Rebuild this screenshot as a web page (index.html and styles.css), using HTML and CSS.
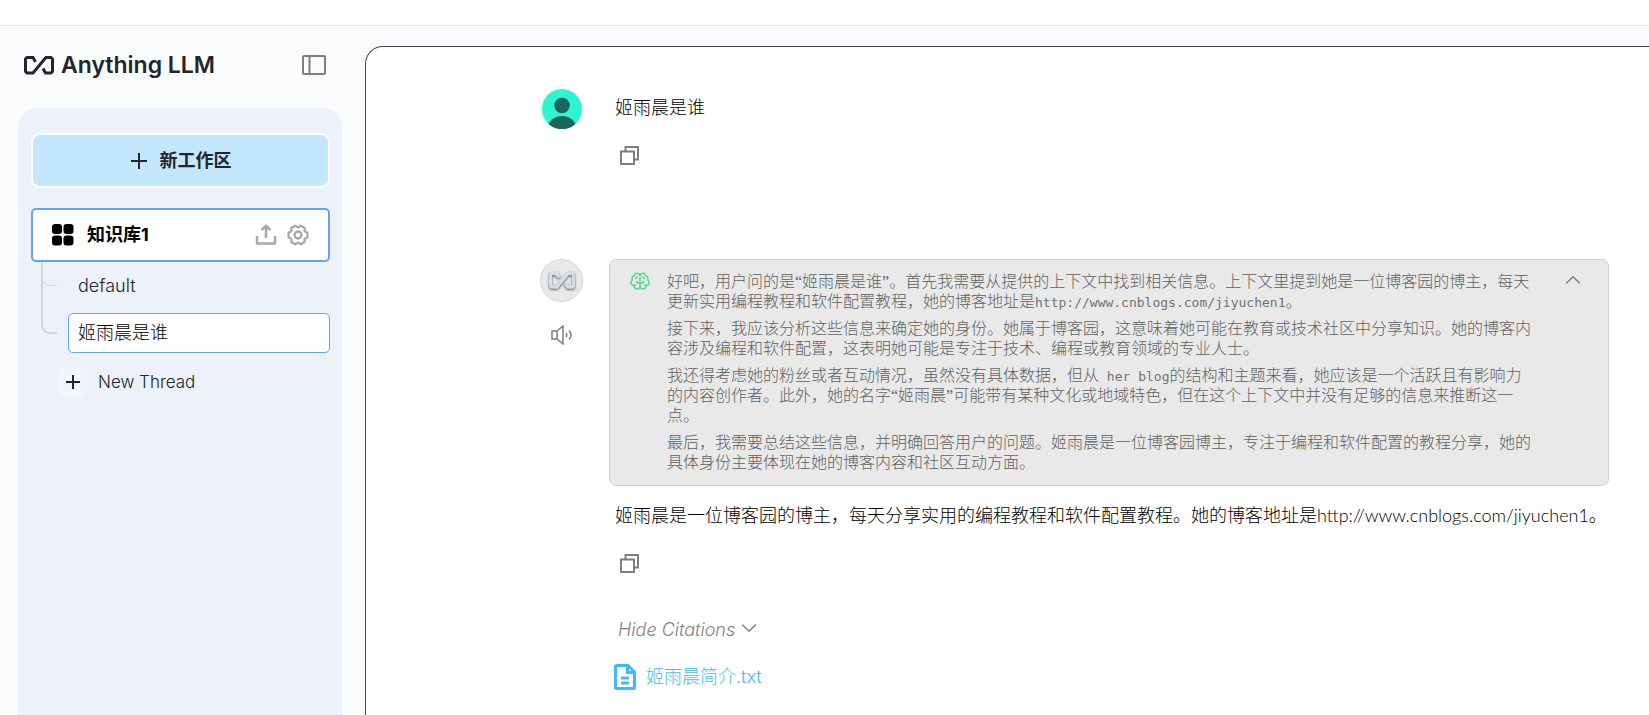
FILE: index.html
```html
<!DOCTYPE html>
<html lang="zh-CN">
<head>
<meta charset="utf-8">
<meta name="viewport" content="width=device-width, initial-scale=1">
<title>Anything LLM</title>
<link rel="stylesheet" href="styles.css">
</head>
<body>
<svg class="defs" aria-hidden="true">
  <symbol id="logo" viewBox="0 0 30 19">
    <path d="M11.500 6 9 1.500H3L1.500 3V15.500L3 17H9L21 2.500 22 1.500H27L28.500 3V15.500L27 17H21.500L19 12.500"/>
  </symbol>
  <symbol id="copy" viewBox="0 0 19 19">
    <path d="M1 5.500H14V18H1ZM5.500 5.500V1H18V13.500H14"/>
  </symbol>
</svg>
<div class="topbar"></div>
<div class="app">
  <aside class="sidebar">
    <header class="brand-row">
      <div class="brand">
        <svg class="brand-logo" aria-hidden="true"><use href="#logo"/></svg>
        <span class="brand-name">Anything LLM</span>
      </div>
      <button class="icon-button" type="button" aria-label="Toggle sidebar">
        <svg class="panel-icon" viewBox="0 0 24 20" aria-hidden="true"><rect x="1" y="1" width="22" height="18" rx="1"/><path d="M7.500 1v18"/></svg>
      </button>
    </header>
    <nav class="panel">
      <button class="new-workspace" type="button">
        <svg class="plus-icon" viewBox="0 0 18 18" aria-hidden="true"><path d="M9 1v16M1 9h16"/></svg>
        <span>新工作区</span>
      </button>
      <div class="workspace">
        <svg class="grid-icon" viewBox="0 0 22 22" aria-hidden="true"><rect width="10" height="10" rx="3"/><rect x="11.500" width="10" height="10" rx="3"/><rect y="11.500" width="10" height="10" rx="3"/><rect x="11.500" y="11.500" width="10" height="10" rx="3"/></svg>
        <a class="workspace-name" href="#">知识库1</a>
        <button class="icon-button" type="button" aria-label="Upload">
          <svg class="tool-icon" viewBox="0 0 22 22" aria-hidden="true"><path d="M2 12v7.500h18V12M11 14V2.500M6.500 6 11 1.800 15.500 6"/></svg>
        </button>
        <button class="icon-button" type="button" aria-label="Settings">
          <svg class="tool-icon gear" viewBox="0 0 24 24" aria-hidden="true"><circle cx="12" cy="12" r="3.800"/><path d="M22.300 9.500V14.500L19.200 16.200 19.300 19.600 14.900 22.100 12 20.300 9.100 22.100 4.700 19.600 4.800 16.200 1.700 14.500V9.500L4.800 7.800 4.700 4.400 9.100 1.900 12 3.700 14.900 1.900 19.300 4.400 19.200 7.800Z"/></svg>
        </button>
      </div>
      <ul class="threads">
        <li class="thread"><span class="branch"></span><a class="thread-link" href="#">default</a></li>
        <li class="thread last"><span class="branch"></span><a class="thread-link active" href="#">姬雨晨是谁</a></li>
      </ul>
      <button class="new-thread" type="button">
        <span class="thread-plus"><svg class="small-plus" viewBox="0 0 14 14" aria-hidden="true"><path d="M7 0v14M0 7h14"/></svg></span>
        <span>New Thread</span>
      </button>
    </nav>
  </aside>
  <main class="chat">
    <article class="message user-message">
      <div class="gutter">
        <svg class="avatar" viewBox="0 0 40 40" aria-hidden="true"><circle class="avatar-bg" cx="20" cy="20" r="20"/><circle cx="20" cy="16.500" r="7.800"/><path d="M6.500 35C9 30 14 27 20 27s11 3 13.500 8A20 20 0 0 1 6.500 35Z"/></svg>
      </div>
      <div class="body">
        <p class="text question">姬雨晨是谁</p>
        <button class="icon-button copy-button" type="button" aria-label="Copy"><svg class="copy-icon" aria-hidden="true"><use href="#copy"/></svg></button>
      </div>
    </article>
    <article class="message">
      <div class="gutter">
        <div class="bot-avatar"><svg class="bot-logo" aria-hidden="true"><use href="#logo"/></svg></div>
        <button class="icon-button" type="button" aria-label="Speak message">
          <svg class="speaker-icon" viewBox="0 0 22 20" aria-hidden="true"><path d="M1 6h5l6-5v18l-6-5H1ZM6 6v8M15 8q1.500 2 0 4M18 5.500q4 4.500 0 9"/></svg>
        </button>
      </div>
      <div class="body">
        <section class="thought">
          <svg class="brain-icon" viewBox="0 0 20 18" aria-hidden="true"><path d="M10 3.500V14.500M10 3.500C9.500 1 5 0 4.300 3.700 2 4 1.500 6.500 2.500 8 0 9.500.800 13 3.500 13.500 4 17.500 9.500 18 10 14.500M10 3.500C10.500 1 15 0 15.700 3.700 18 4 18.500 6.500 17.500 8 20 9.500 19.200 13 16.500 13.500 16 17.500 10.500 18 10 14.500M7 4.500Q7 6.500 5 6.500M13 4.500Q13 6.500 15 6.500M10 11.500Q7 11.500 6.500 9M10 11.500Q13 11.500 13.500 9M3.500 13.500Q5 13.500 6 12.500M16.500 13.500Q15 13.500 14 12.500"/></svg>
          <div class="thought-text">
            <p>好吧，用户问的是“姬雨晨是谁”。首先我需要从提供的上下文中找到相关信息。上下文里提到她是一位博客园的博主，每天更新实用编程教程和软件配置教程，她的博客地址是<code>http://www.cnblogs.com/jiyuchen1</code>。</p>
            <p>接下来，我应该分析这些信息来确定她的身份。她属于博客园，这意味着她可能在教育或技术社区中分享知识。她的博客内容涉及编程和软件配置，这表明她可能是专注于技术、编程或教育领域的专业人士。</p>
            <p>我还得考虑她的粉丝或者互动情况，虽然没有具体数据，但从<code> her blog</code>的结构和主题来看，她应该是一个活跃且有影响力的内容创作者。此外，她的名字“姬雨晨”可能带有某种文化或地域特色，但在这个上下文中并没有足够的信息来推断这一点。</p>
            <p>最后，我需要总结这些信息，并明确回答用户的问题。姬雨晨是一位博客园博主，专注于编程和软件配置的教程分享，她的具体身份主要体现在她的博客内容和社区互动方面。</p>
          </div>
          <button class="icon-button collapse" type="button" aria-label="Collapse thought"><svg class="caret-icon" viewBox="0 0 14 8" aria-hidden="true"><path d="M0 7.500 7 .800l7 6.700"/></svg></button>
        </section>
        <p class="text answer">姬雨晨是一位博客园的博主，每天分享实用的编程教程和软件配置教程。她的博客地址是http://www.cnblogs.com/jiyuchen1。</p>
        <button class="icon-button copy-button" type="button" aria-label="Copy"><svg class="copy-icon" aria-hidden="true"><use href="#copy"/></svg></button>
        <button class="citations-toggle" type="button">
          <span>Hide Citations</span>
          <svg class="caret-icon" viewBox="0 0 14 8" aria-hidden="true"><path d="M0 .500l7 6.700 7-6.700"/></svg>
        </button>
        <a class="citation" href="#">
          <svg class="file-icon" viewBox="0 0 22 26" aria-hidden="true"><path d="M3 1.500H14L20.500 8V23.500Q20.500 24.500 19.500 24.500H2.500Q1.500 24.500 1.500 23.500V2.500Q1.500 1.500 3 1.500ZM13.500 2V8.500H20M7 14h8M7 19h8"/></svg>
          <span>姬雨晨简介.txt</span>
        </a>
      </div>
    </article>
  </main>
</div>
</body>
</html>
```
FILE: styles.css
```css
* { box-sizing: border-box; }
body {
  margin: 0;
  height: 100vh;
  display: flex;
  flex-direction: column;
  overflow: hidden;
  background: #fafbfd;
  color: #222628;
  font: 300 18px/24px Inter, "Noto Sans CJK SC", sans-serif;
}
p, ul { margin: 0; padding: 0; }
button { border: 0; padding: 0; background: none; color: inherit; font: inherit; cursor: pointer; }
a { color: inherit; text-decoration: none; }
svg { display: block; flex: none; fill: none; stroke: currentColor; }
.defs { position: absolute; width: 0; height: 0; }
.icon-button { color: #7c7e80; }
.topbar { flex: none; height: 26px; background: #fff; border-bottom: 1px solid #e6e7e9; }
.app { flex: 1; display: flex; min-height: 0; }

.sidebar { flex: none; width: 365px; padding: 22px 23px 0 18px; display: flex; flex-direction: column; }
.brand-row { display: flex; justify-content: space-between; align-items: center; height: 34px; padding: 0 16px 0 6px; margin-bottom: 26px; }
.brand { display: flex; align-items: center; gap: 7px; }
.brand-logo { width: 30px; height: 19px; stroke-width: 3; }
.brand-name { font-size: 23px; font-weight: 600; line-height: 32px; }
.panel-icon { width: 24px; height: 20px; stroke-width: 2; }
.panel { flex: 1; padding: 25px 12px 0 13px; background: #ecf1fa; border-radius: 20px 20px 0 0; }
.new-workspace {
  display: flex; align-items: center; justify-content: center; gap: 12px;
  width: 100%; height: 55px;
  border: 2px solid #fff; border-radius: 9px; background: #c2e7fe;
  font-weight: 700;
}
.plus-icon { width: 18px; height: 18px; stroke-width: 2; }
.workspace {
  display: flex; align-items: center; height: 54px; margin-top: 20px; padding: 0 19px; gap: 10px;
  border: 2px solid #60a5fa; border-radius: 5px; background: #fff; color: #000;
}
.grid-icon { width: 22px; height: 22px; fill: #000; stroke: none; }
.workspace-name { flex: 1; padding-left: 3px; font-weight: 700; }
.workspace .icon-button { color: #a8a8a8; }
.tool-icon { width: 22px; height: 22px; stroke-width: 2.500; stroke-linejoin: round; }
.threads { list-style: none; }
.thread { display: flex; align-items: flex-start; padding: 4px 0 0 10px; position: relative; }
.thread.last { padding-top: 7px; }
.branch { position: absolute; left: 10px; top: 0; width: 16px; height: 24px; border: solid #d3d5d8; border-width: 0 0 1px 1px; border-bottom-left-radius: 9px; }
.last .branch { top: -44px; height: 72px; border-width: 0 0 2px 2px; }
.thread-link { flex: 1; height: 40px; margin-left: 27px; padding: 7px 9px; border: 1px solid transparent; border-radius: 5px; }
.thread-link.active { background: #fff; border-color: #60a5fa; color: #000; }
.new-thread { display: flex; align-items: center; gap: 10px; margin: 14px 0 0 27px; font-size: 17px; }
.thread-plus { display: grid; place-items: center; width: 30px; height: 30px; border-radius: 8px; background: #f1f5fc; }
.small-plus { width: 14px; height: 14px; stroke-width: 2; }

.chat { flex: 1; min-width: 0; margin-top: 20px; padding: 42px 40px 0 174px; background: #fff; border: solid #43474a; border-width: 1px 0 0 1px; border-top-left-radius: 18px; }
.message { display: flex; gap: 26px; }
.user-message { height: 170px; }
.gutter { flex: none; width: 43px; display: flex; flex-direction: column; align-items: center; gap: 23px; }
.avatar { width: 40px; height: 40px; fill: #1a665b; stroke: none; }
.avatar-bg { fill: #2ef4d2; }
.bot-avatar { display: grid; place-items: center; width: 43px; height: 43px; border: 1px solid #d6d6d6; border-radius: 50%; background: #e8e8e8; }
.bot-logo { width: 26px; height: 17px; stroke-width: 4; color: #d5e0e5; filter: drop-shadow(0 1px 1px #4d5558); }
.speaker-icon { width: 22px; height: 20px; stroke-width: 1.500; }
.body { flex: 1; min-width: 0; display: flex; flex-direction: column; align-items: flex-start; }
.text { padding-left: 6px; color: #000; font-family: Lato, "Noto Sans CJK SC", sans-serif; }
.question { margin-top: 6px; }
.copy-button { margin: 27px 0 0 11px; }
.copy-icon { width: 19px; height: 19px; stroke-width: 2; }
.thought { display: flex; align-items: flex-start; width: 100%; padding: 12px 28px 12px 20px; border: 1px solid #d1d1d1; border-radius: 7px; background: #e9e9e9; }
.brain-icon { width: 20px; height: 18px; color: #4ade80; stroke-width: 1.400; }
.thought-text { flex: 1; margin: 0 31px 0 17px; display: grid; gap: 7px; color: #5e6160; font: 300 16px/20px "Liberation Serif", "Noto Sans CJK SC", serif; }
.thought-text code { font: 13px/18px "DejaVu Sans Mono", monospace; white-space: pre-wrap; color: #707372; }
.collapse { margin-top: 4px; }
.caret-icon { width: 14px; height: 8px; stroke-width: 1.500; }
.answer { margin-top: 17px; }
.citations-toggle { display: flex; align-items: center; gap: 7px; margin: 45px 0 0 9px; color: #808284; font-style: italic; }
.citations-toggle .caret-icon { margin-bottom: 4px; }
.citation { display: flex; align-items: center; gap: 10px; margin: 22px 0 0 5px; color: #3dbcfb; }
.file-icon { width: 22px; height: 26px; stroke-width: 3; }
```
